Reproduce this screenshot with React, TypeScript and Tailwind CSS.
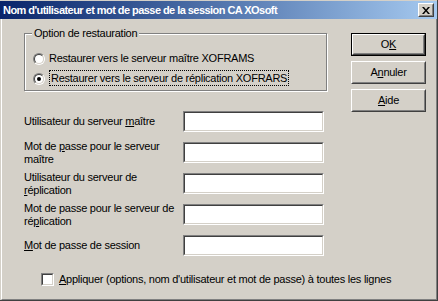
import type { ReactNode } from "react";

const font = { fontFamily: '"Liberation Sans", Arial, sans-serif' };

function Sunken({ className, children }: { className: string; children?: ReactNode }) {
  return (
    <div className={`border border-t-[#808080] border-l-[#808080] border-b-white border-r-white ${className}`}>
      <div className="h-full w-full border border-t-[#404040] border-l-[#404040] border-b-[#d4d0c8] border-r-[#d4d0c8] bg-white">
        {children}
      </div>
    </div>
  );
}

function Button({ children, isDefault }: { children: ReactNode; isDefault?: boolean }) {
  const inner = (
    <div className="h-full w-full border border-t-white border-l-white border-b-[#404040] border-r-[#404040]">
      <div className="flex h-full w-full items-center justify-center border border-t-[#d4d0c8] border-l-[#d4d0c8] border-b-[#808080] border-r-[#808080] text-[11px] text-black">
        {children}
      </div>
    </div>
  );
  return isDefault ? (
    <div className="h-[23px] w-[75px] border border-black">{inner}</div>
  ) : (
    <div className="h-[23px] w-[75px]">{inner}</div>
  );
}

function Radio({ checked, children }: { checked?: boolean; children: ReactNode }) {
  return (
    <div className="flex h-[17px] items-center">
      <div className="ml-[8px] h-[12px] w-[12px] rounded-full border border-t-[#808080] border-l-[#808080] border-b-white border-r-white">
        <div className="flex h-full w-full items-center justify-center rounded-full border border-t-[#404040] border-l-[#404040] border-b-[#d4d0c8] border-r-[#d4d0c8] bg-white">
          {checked && <div className="h-[4px] w-[4px] rounded-full bg-black" />}
        </div>
      </div>
      <div className="ml-[4px] whitespace-nowrap">{children}</div>
    </div>
  );
}

function Row({ label }: { label: ReactNode }) {
  return (
    <div className="flex h-[21px] items-center">
      <div className="w-[159px] whitespace-nowrap leading-[13px]">{label}</div>
      <Sunken className="h-[21px] w-[141px]" />
    </div>
  );
}

export default function App() {
  return (
    <div style={font} className="h-[301px] w-[438px] overflow-hidden bg-[#d4d0c8] text-[11px] tracking-[-0.25px] text-black">
      <div className="flex h-full flex-col border-r border-b border-r-[#404040] border-b-[#404040] pt-[1px]">
        <div className="flex h-[18px] items-center justify-between bg-linear-to-r from-[#0a246a] to-[#a6caf0] pl-[3px] pr-[3px]">
          <span className="whitespace-nowrap font-bold tracking-[-0.55px] text-white">Nom d'utilisateur et mot de passe de la session CA XOsoft</span>
          <div className="h-[14px] w-[16px] border border-t-white border-l-white border-b-[#404040] border-r-[#404040] bg-[#d4d0c8]">
            <div className="flex h-full w-full items-center justify-center border border-t-[#d4d0c8] border-l-[#d4d0c8] border-b-[#808080] border-r-[#808080]">
              <svg width="8" height="7" viewBox="0 0 8 7">
                <path d="M0 0h2l2 2.5L6 0h2L5 3.5 8 7H6L4 4.5 2 7H0l3-3.5z" fill="black" />
              </svg>
            </div>
          </div>
        </div>
        <div className="ml-[1px] flex flex-1 border-l border-r border-b border-l-white border-r-[#808080] border-b-[#808080] pl-[22px]">
          <div className="flex w-[303px] flex-col">
            <div className="relative mt-[14px] h-[58px] border border-[#808080] shadow-[inset_1px_1px_0_#fff,1px_1px_0_#fff]">
              <span className="absolute -top-[7px] left-[7px] whitespace-nowrap bg-[#d4d0c8] px-[2px] leading-[13px]">Option de restauration</span>
              <div className="flex flex-col gap-[3px] pt-[16px]">
                <Radio>Restaurer vers le serveur maître XOFRAMS</Radio>
                <Radio checked>
                  <span className="border border-dotted border-black px-[1px] py-[1px]">Restaurer vers le serveur de réplication XOFRARS</span>
                </Radio>
              </div>
            </div>
            <div className="mt-[20px] flex flex-col gap-[10px]">
              <Row label={<>Utilisateur du serveur <u>m</u>aître</>} />
              <Row label={<>Mot de <u>p</u>asse pour le serveur<br />maître</>} />
              <Row label={<>Utilisateur du serveur de<br /><u>r</u>éplication</>} />
              <Row label={<>Mot de passe pour le serveur de<br />ré<u>p</u>lication</>} />
              <Row label={<><u>M</u>ot de passe de session</>} />
            </div>
            <div className="mt-[15px] flex items-center pl-[17px]">
              <Sunken className="h-[13px] w-[13px] shrink-0" />
              <span className="ml-[5px] whitespace-nowrap"><u>A</u>ppliquer (options, nom d'utilisateur et mot de passe) à toutes les lignes</span>
            </div>
          </div>
          <div className="ml-[24px] mt-[14px] flex flex-col gap-[5px]">
            <Button isDefault>O<u>K</u></Button>
            <Button>A<u>n</u>nuler</Button>
            <Button><u>A</u>ide</Button>
          </div>
        </div>
      </div>
    </div>
  );
}
